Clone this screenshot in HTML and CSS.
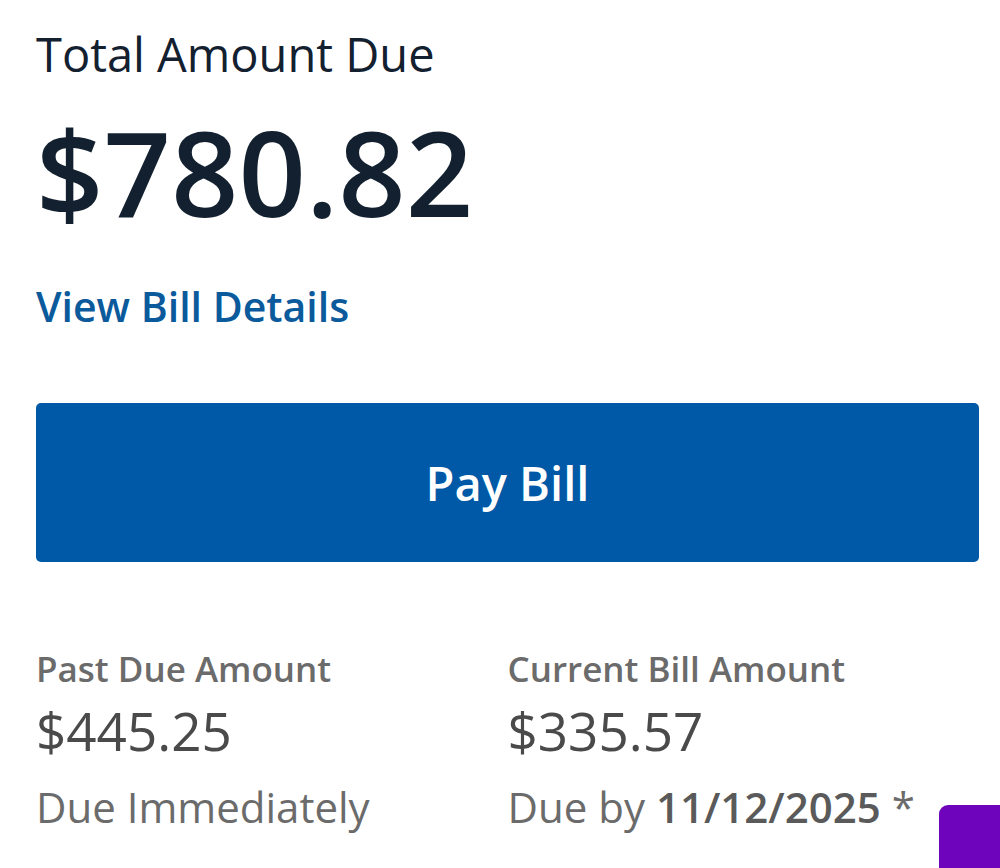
FILE: index.html
```html
<!DOCTYPE html>
<html lang="en">
<head>
<meta charset="utf-8">
<title>Bill</title>
<link rel="stylesheet" href="styles.css">
</head>
<body>
<main class="bill">
  <h1 class="bill-title">Total Amount Due</h1>
  <div class="bill-total">$780.82</div>
  <a class="bill-link" href="#">View Bill Details</a>
  <button class="pay-btn" type="button">Pay Bill</button>
  <section class="breakdown">
    <div class="breakdown-col">
      <div class="bd-label">Past Due Amount</div>
      <div class="bd-amount">$445.25</div>
      <div class="bd-note">Due Immediately</div>
    </div>
    <div class="breakdown-col">
      <div class="bd-label">Current Bill Amount</div>
      <div class="bd-amount">$335.57</div>
      <div class="bd-note">Due by <strong>11/12/2025</strong> *</div>
    </div>
  </section>
</main>
<div class="chat-fab"></div>
</body>
</html>
```
FILE: styles.css
```css
html, body {
  margin: 0;
  padding: 0;
  background: #ffffff;
  overflow: hidden;
}
body {
  font-family: "Open Sans", "Noto Sans", sans-serif;
  height: 868px;
  position: relative;
}
.bill {
  padding: 24px 21px 0 36px;
  display: flex;
  flex-direction: column;
}
.bill-title {
  margin: 0;
  font-size: 47px;
  font-weight: 500;
  color: #13202f;
  line-height: 60px;
}
.bill-total {
  margin-top: 28px;
  font-size: 118px;
  font-weight: 600;
  color: #13202f;
  line-height: 120px;
}
.bill-link {
  margin-top: 48px;
  font-size: 41px;
  font-weight: 600;
  color: #0a5a9c;
  text-decoration: none;
  line-height: 52px;
  align-self: flex-start;
}
.pay-btn {
  margin-top: 71px;
  height: 159px;
  border: 0;
  border-radius: 5px;
  background: #0059a6;
  color: #ffffff;
  font-family: inherit;
  font-size: 47px;
  font-weight: 600;
  line-height: 60px;
  cursor: pointer;
}
.breakdown {
  margin-top: 85px;
  display: grid;
  grid-template-columns: 1fr 1fr;
}
.bd-label {
  font-size: 35px;
  font-weight: 600;
  color: #6b6b6b;
  line-height: 44px;
}
.bd-amount {
  margin-top: 10px;
  font-size: 53px;
  font-weight: 400;
  color: #4a4a4a;
  line-height: 60px;
}
.bd-note {
  margin-top: 21px;
  font-size: 42px;
  font-weight: 400;
  color: #6b6b6b;
  line-height: 50px;
}
.bd-note strong {
  font-weight: 600;
  color: #5a5a5a;
}
.chat-fab {
  position: absolute;
  right: 0;
  bottom: 0;
  width: 61px;
  height: 63px;
  border-radius: 9px 0 0 0;
  background: #6e05bd;
}
```
